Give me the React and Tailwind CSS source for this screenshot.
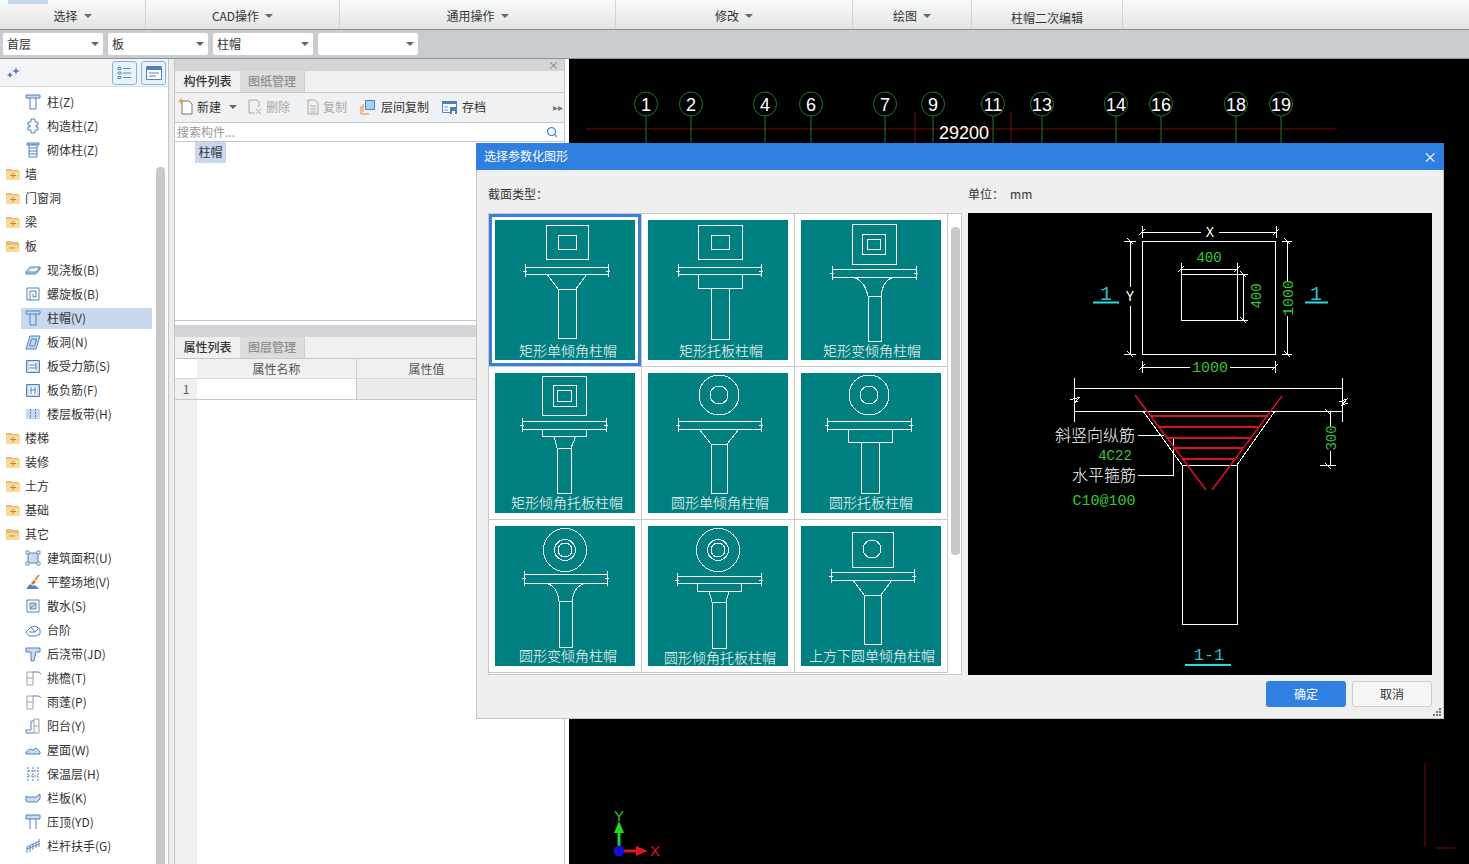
import { Search } from 'lucide-react'

const ribbon = [
  { label: '选择', w: 'w-[146px]' },
  { label: 'CAD操作', w: 'w-[194px]' },
  { label: '通用操作', w: 'w-[276px]' },
  { label: '修改', w: 'w-[237px]' },
  { label: '绘图', w: 'w-[119px]' },
  { label: '柱帽二次编辑', w: 'w-[151px]', plain: true },
]

const selects = ['首层', '板', '柱帽', '']

const B = '#4f81bd'
const L = '#c6dcf5'

// Small tree icons, 16x16
const icons = {
  column: <><path d="M1 1h14v3H1z" fill={L} stroke={B} /><path d="M5 4v11h6V4" fill="none" stroke={B} /></>,
  gz: <path d="M6 1h4v3h3v3h-2v2h2v3h-3v3H6v-3H3V9h2V7H3V4h3z" fill="#fff" stroke={B} />,
  brick: <><path d="M2 1h12v2H2z" fill={L} stroke={B} /><path d="M4 3h8v12H4z" fill="#fff" stroke={B} /><path d="M4 6h8M4 9h8M4 12h8" stroke={B} /></>,
  slab: <path d="M1 10l4-5h10v2l-4 5H1zM1 10h10l4-5" fill={L} stroke={B} />,
  spiral: <><path d="M2 2h12v12H2z" fill="#fff" stroke={B} /><path d="M5 14V5h6v6H8V8" fill="none" stroke={B} /></>,
  hole: <path d="M5 2h10l-4 13H1zM6.5 5h5l-2 7h-5z" fill={L} stroke={B} />,
  rebarH: <><path d="M1.500 2.500h13v12h-13z" fill={L} stroke={B} /><path d="M4 4.500h8v8H4z" fill="#fff" /><path d="M4 7h7M4 10h7M11 5v7" stroke={B} fill="none" /></>,
  rebarV: <><path d="M1.500 2.500h13v12h-13z" fill={L} stroke={B} /><path d="M4 4.500h8v8H4z" fill="#fff" /><path d="M6 5v7M10 5v7M5 8h6" stroke={B} fill="none" /></>,
  band: <><path d="M1 3h14v10H1z" fill={L} /><path d="M5.5 3v10M10.5 3v10" stroke={B} strokeDasharray="2 1" /></>,
  area: <><path d="M3 3h10v10H3z" fill={L} stroke={B} /><path d="M1 1h3v3H1zM12 1h3v3h-3zM1 12h3v3H1zM12 12h3v3h-3z" fill="#fff" stroke="#7a8ca5" /></>,
  site: <><path d="M1 15l4-5 3 2 2-1 4 4z" fill={B} /><path d="M6 9l3-3 2 2-3 3z" fill="#e0702a" /><path d="M10 6l4-5" stroke="#e0702a" strokeWidth="1.5" /></>,
  apron: <><path d="M2 2h12v12H2z" fill="#fff" stroke={B} /><path d="M5 5h6v6H5z" fill={L} stroke={B} /><path d="M6 10l4-4" stroke="#c06030" /></>,
  step: <path d="M1 10l5-5 4-1 5 3v5l-4 2H4zM4 10h6l3-3M6 5l4 5" fill="#fff" stroke={B} />,
  joint: <path d="M1 2h14v4h-4l-2 9H6V6H1z" fill={L} stroke={B} />,
  eave: <><path d="M2 2h6v13H2zM2 8h6" fill="#fff" stroke="#a0a0a0" /><path d="M8 2h6l2 2" fill="none" stroke={B} /></>,
  balcony: <><path d="M9 1h5v14H9zM9 8h5" fill="#fff" stroke="#a0a0a0" /><path d="M9 3H6v9H1v3h8" fill="none" stroke={B} /></>,
  roof: <path d="M1 10l4-3 3 1 3-2 4 4v2H1z" fill={L} stroke={B} />,
  insul: <path d="M3 1v14M8 1v14M13 1v14M3 5h10M3 10h10" fill="none" stroke={B} strokeDasharray="2 1" />,
  rail: <path d="M1 6l2 1h8l4-3v5l-3 3H3L1 11z" fill={L} stroke={B} />,
  coping: <><path d="M1 1h14v4H1z" fill={L} stroke={B} /><path d="M5 5v10M11 5v10" stroke={B} /></>,
  handrail: <path d="M2 15V9l12-6M5 8v6M8 6v6M11 5v5M14 1v8M2 11l12-5" fill="none" stroke={B} />,
}

const tree = [
  { label: '柱(Z)', icon: 'column' },
  { label: '构造柱(Z)', icon: 'gz' },
  { label: '砌体柱(Z)', icon: 'brick' },
  { label: '墙', group: true },
  { label: '门窗洞', group: true },
  { label: '梁', group: true },
  { label: '板', group: true, open: true },
  { label: '现浇板(B)', icon: 'slab' },
  { label: '螺旋板(B)', icon: 'spiral' },
  { label: '柱帽(V)', icon: 'column', selected: true },
  { label: '板洞(N)', icon: 'hole' },
  { label: '板受力筋(S)', icon: 'rebarH' },
  { label: '板负筋(F)', icon: 'rebarV' },
  { label: '楼层板带(H)', icon: 'band' },
  { label: '楼梯', group: true },
  { label: '装修', group: true },
  { label: '土方', group: true },
  { label: '基础', group: true },
  { label: '其它', group: true, open: true },
  { label: '建筑面积(U)', icon: 'area' },
  { label: '平整场地(V)', icon: 'site' },
  { label: '散水(S)', icon: 'apron' },
  { label: '台阶', icon: 'step' },
  { label: '后浇带(JD)', icon: 'joint' },
  { label: '挑檐(T)', icon: 'eave' },
  { label: '雨蓬(P)', icon: 'eave' },
  { label: '阳台(Y)', icon: 'balcony' },
  { label: '屋面(W)', icon: 'roof' },
  { label: '保温层(H)', icon: 'insul' },
  { label: '栏板(K)', icon: 'rail' },
  { label: '压顶(YD)', icon: 'coping' },
  { label: '栏杆扶手(G)', icon: 'handrail' },
]

function Caret() {
  return <span className="inline-block border-x-[4px] border-t-[4px] border-x-transparent border-t-[#666]" />
}

function Folder({ open }) {
  return (
    <svg width="16" height="14" viewBox="0 0 16 14" className="shrink-0">
      <path d="M1 2h5l1 1h7v10H1z" fill="#e8bc6c" />
      <path d={open ? 'M0 6h13l2 7H1z' : 'M1 4h14v9H1z'} fill="#f8d99a" />
      <path d={open ? 'M4 9h6' : 'M5 8.500h6M8 6v5'} stroke="#c08a30" />
    </svg>
  )
}

function TreeRow({ item }) {
  if (item.group) {
    return (
      <div className="h-[24px] flex items-center pl-[5px] gap-[4px]">
        <Folder open={item.open} />
        <span>{item.label}</span>
      </div>
    )
  }
  return (
    <div className="h-[24px] flex items-center">
      <div className={`ml-[21px] w-[131px] h-[21px] flex items-center pl-[4px] gap-[6px] ${item.selected ? 'bg-[#c9d8ee]' : ''}`}>
        <svg width="16" height="16" viewBox="0 0 16 16" className="shrink-0">{icons[item.icon]}</svg>
        <span>{item.label}</span>
      </div>
    </div>
  )
}

function LeftPanel() {
  return (
    <div className="w-[169px] shrink-0 flex flex-col bg-white border-r border-[#c4c4c4]">
      <div className="h-[28px] shrink-0 bg-[#f3f4f6] border-b border-[#dcdcdc] flex items-center pl-[6px]">
        <svg width="15" height="14" viewBox="0 0 15 14">
          <path d="M10 1l1 3 3 1-3 1-1 3-1-3-3-1 3-1zM4 6l1 2 2 1-2 1-1 2-1-2-2-1 2-1z" fill="#4f7fc0" />
        </svg>
        <button className="ml-[91px] w-[25px] h-[24px] rounded-[3px] border border-[#7db5ea] bg-[#e8f2fc] flex items-center justify-center">
          <svg width="15" height="14" viewBox="0 0 15 14" fill="none" stroke="#5b8cc8">
            <path d="M1 1.500h3v2H1zM1 6h3v2H1zM1 10.500h3v2H1zM6 2.500h8M6 7h8M6 11.500h8" />
          </svg>
        </button>
        <button className="ml-[4px] w-[25px] h-[24px] rounded-[3px] border border-[#7db5ea] bg-[#e8f2fc] flex items-center justify-center">
          <svg width="16" height="14" viewBox="0 0 16 14">
            <path d="M.5.500h15v13H.5z" fill="#fff" stroke="#4f81bd" />
            <path d="M1 1h14v3H1z" fill="#4f81bd" />
            <path d="M3 7h10M3 10h7" stroke="#4f81bd" />
          </svg>
        </button>
      </div>
      <div className="flex-1 flex min-h-0">
        <div className="w-[156px] pt-[3px] overflow-hidden">
          {tree.map((t) => (
            <TreeRow key={t.label + (t.icon || '')} item={t} />
          ))}
        </div>
        <div className="pt-[80px]">
          <div className="w-[9px] h-full bg-[#c8c8c8] rounded-t-[4px]" />
        </div>
      </div>
    </div>
  )
}

function Tabs({ a, b }) {
  return (
    <div className="h-[22px] shrink-0 bg-[#f0f0f0] border-b border-[#c8c8c8] flex font-medium">
      <div className="w-[65px] flex items-center justify-center pb-[2px] text-[#333]">{a}</div>
      <div className="w-[65px] flex items-center justify-center pb-[2px] bg-[#dcdcdc] text-[#8e8e8e] border-r border-[#cfcfcf]">{b}</div>
    </div>
  )
}

function MiddlePanel() {
  return (
    <div className="w-[391px] shrink-0 flex flex-col bg-white border-x border-[#c4c4c4]">
      <div className="h-[12px] shrink-0 bg-[#d3d5d9] flex items-center justify-end pr-[5px] text-[11px] leading-none text-[#777]">×</div>
      <Tabs a="构件列表" b="图纸管理" />
      <div className="h-[30px] shrink-0 bg-[#f0f1f3] border-b border-[#c8c8c8] flex items-center pl-[3px] pb-[2px]">
        <svg width="16" height="17" viewBox="0 0 16 17" className="shrink-0">
          <path d="M4 3h7l3 3v10H4z" fill="#fff" stroke="#777" />
          <path d="M3 0l1 2 2 1-2 1-1 2-1-2-2-1 2-1z" fill="#e8a030" />
        </svg>
        <span className="ml-[3px] text-[#333]">新建</span>
        <span className="ml-[8px] flex"><Caret /></span>
        <svg width="16" height="16" viewBox="0 0 16 16" className="ml-[10px] shrink-0" fill="none" stroke="#a8a8a8">
          <path d="M2 1h8l2 2v5M2 1v13h6M9 10l5 5M14 10l-5 5" />
        </svg>
        <span className="ml-[3px] text-[#a8a8a8]">删除</span>
        <svg width="16" height="16" viewBox="0 0 16 16" className="ml-[15px] shrink-0" fill="none" stroke="#a8a8a8">
          <path d="M3 1h7l3 3v11H3zM5 7h6M5 10h6M5 13h6" />
        </svg>
        <span className="ml-[2px] text-[#a8a8a8]">复制</span>
        <svg width="16" height="16" viewBox="0 0 16 16" className="ml-[13px] shrink-0">
          <path d="M1 15V7M1 15h8" stroke="#e08a40" fill="none" />
          <path d="M3 13V5" stroke="#e08a40" />
          <path d="M5.500 1.500h9v9h-9z" fill="#a9cdf5" stroke="#4f81bd" />
        </svg>
        <span className="ml-[5px] text-[#333]">层间复制</span>
        <svg width="16" height="16" viewBox="0 0 16 16" className="ml-[13px] shrink-0">
          <path d="M.5 2.500h14v11H.5z" fill="#fff" stroke="#4f81bd" />
          <path d="M0 2h15v3H0z" fill="#4f81bd" />
          <path d="M2 7h4v2H2zM2 10h4v2H2z" fill="#a9cdf5" />
          <path d="M8 8h7v7H8z" fill="#4f81bd" />
          <path d="M10 12h3v3h-3z" fill="#fff" />
        </svg>
        <span className="ml-[4px] text-[#333]">存档</span>
        <span className="ml-auto mr-[1px] text-[10px] leading-none text-[#777]">▸▸</span>
      </div>
      <div className="h-[19px] shrink-0 border-b border-[#c8c8c8] flex items-center pl-[2px] pr-[6px] text-[#999]">
        <span>搜索构件...</span>
        <Search size={12} strokeWidth={2.5} color="#3f86d8" className="ml-auto" />
      </div>
      <div className="h-[179px] shrink-0 border-b border-[#c8c8c8] pl-[20px]">
        <div className="w-[31px] h-[21px] pb-[2px] bg-[#c9d8ee] flex items-center justify-center text-[#333]">柱帽</div>
      </div>
      <div className="h-[4px] shrink-0" />
      <div className="h-[12px] shrink-0 bg-[#d3d5d9]" />
      <Tabs a="属性列表" b="图层管理" />
      <div className="h-[20px] shrink-0 flex text-[#555] bg-[#f0f0f0] border-b border-[#d8d8d8]">
        <div className="w-[22px] bg-white" />
        <div className="w-[160px] flex items-center justify-center border-r border-[#d0d0d0]">属性名称</div>
        <div className="w-[139px] flex items-center justify-center">属性值</div>
      </div>
      <div className="h-[21px] shrink-0 flex border-b border-[#c8c8c8]">
        <div className="w-[22px] bg-[#f0f0f0] flex items-center justify-center text-[#555]">1</div>
        <div className="w-[160px] bg-white border-r border-[#c8c8c8]" />
        <div className="flex-1 bg-[#ebebeb]" />
      </div>
      <div className="flex-1 flex">
        <div className="w-[22px] bg-[#f0f0f0]" />
      </div>
    </div>
  )
}

const gridX = [646, 691, 765, 811, 885, 933, 993, 1042, 1116, 1161, 1236, 1281]
const gridLabels = [1, 2, 4, 6, 7, 9, 11, 13, 14, 16, 18, 19]

function CadCanvas() {
  return (
    <div className="flex-1 relative bg-black overflow-hidden">
      <svg width="900" height="805" viewBox="569 59 900 805" className="absolute inset-0" fill="none" fontFamily="'Liberation Sans', sans-serif">
        <path d="M586 129H1336" stroke="#7a0a0a" />
        <path d="M915 112V143M1011 112V143" stroke="#7a0a0a" />
        {gridX.map((x, i) => (
          <g key={x}>
            <path d={`M${x} 116V143`} stroke="#1a7a2a" />
            <ellipse cx={x} cy="104" rx="11.500" ry="12" stroke="#1a7a2a" />
            <text x={x} y="110.500" fontSize="18" fill="#fff" textAnchor="middle">{gridLabels[i]}</text>
          </g>
        ))}
        <text x="964" y="139" fontSize="18" fill="#fff" textAnchor="middle">29200</text>
        <path d="M1425 763V847M1436 848H1455" stroke="#7a0a0a" />
        <path d="M619 851V831" stroke="#22d822" strokeWidth="3" />
        <path d="M619 821l-5 12h10z" fill="#22d822" />
        <path d="M619 851H638" stroke="#e01818" strokeWidth="3" />
        <path d="M648 851l-12-5v10z" fill="#e01818" />
        <circle cx="619" cy="851" r="5.500" fill="#1010d0" />
        <text x="619" y="821" fontSize="15" fill="#22c822" textAnchor="middle">Y</text>
        <text x="655" y="856" fontSize="15" fill="#d01818" textAnchor="middle">X</text>
      </svg>
    </div>
  )
}

// Slab with break ticks at both ends, shared by the thumbnails
function Slab({ x1, x2, y1, y2 }) {
  return (
    <path d={`M${x1} ${y1}H${x2}V${y2}H${x1}ZM${x1} ${y1 - 3}V${y2 + 3}M${x2} ${y1 - 3}V${y2 + 3}M${x1 - 2} ${y1 + 4}H${x1 + 2}M${x2 - 2} ${y1 + 4}H${x2 + 2}`} />
  )
}

const tiles = [
  {
    label: '矩形单倾角柱帽', lx: 73, ly: 136,
    draw: <>
      <path d="M51 5H93V39H51ZM63 15H81V29H63Z" />
      <Slab x1={30} x2={113} y1={47} y2={54} />
      <path d="M52 54L63 69M92 54L81 69M63 69H81V118H63Z" />
    </>,
  },
  {
    label: '矩形托板柱帽', lx: 73, ly: 136,
    draw: <>
      <path d="M50 5H94V39H50ZM63 15H81V29H63Z" />
      <Slab x1={30} x2={113} y1={47} y2={54} />
      <path d="M50 54H94V68H50ZM63 68H81V119H63Z" />
    </>,
  },
  {
    label: '矩形变倾角柱帽', lx: 71, ly: 136,
    draw: <>
      <path d="M51 4H95V44H51ZM61 14H84V34H61ZM66 19H79V29H66Z" />
      <Slab x1={31} x2={115} y1={49} y2={57} />
      <path d="M51 57Q63 59 67 76M94 57Q82 59 80 76M67 76H80V121H67Z" />
    </>,
  },
  {
    label: '矩形倾角托板柱帽', lx: 72, ly: 135,
    draw: <>
      <path d="M47 3H91V42H47ZM58 12H81V33H58ZM62 17H76V28H62Z" />
      <Slab x1={27} x2={111} y1={48} y2={56} />
      <path d="M47 56H91V63H47ZM59 63L62 75M81 63L76 75M62 75H76V120H62Z" />
    </>,
  },
  {
    label: '圆形单倾角柱帽', lx: 72, ly: 135,
    draw: <>
      <circle cx="71" cy="22" r="20" />
      <circle cx="71" cy="22" r="9" />
      <Slab x1={30} x2={113} y1={48} y2={56} />
      <path d="M51 56L63 71M91 56L79 71M63 71H79V120H63Z" />
    </>,
  },
  {
    label: '圆形托板柱帽', lx: 70, ly: 135,
    draw: <>
      <circle cx="68" cy="22" r="20" />
      <circle cx="68" cy="22" r="9" />
      <Slab x1={26} x2={110} y1={48} y2={56} />
      <path d="M47 56H91V69H47ZM60 69H78V120H60Z" />
    </>,
  },
  {
    label: '圆形变倾角柱帽', lx: 73, ly: 135,
    draw: <>
      <circle cx="70" cy="24" r="21.500" />
      <circle cx="70" cy="24" r="10.500" />
      <circle cx="70" cy="24" r="7" />
      <Slab x1={29} x2={112} y1={48} y2={57} />
      <path d="M50 57Q62 59 64 75M92 57Q79 59 77 75M64 75H77V121H64Z" />
    </>,
  },
  {
    label: '圆形倾角托板柱帽', lx: 72, ly: 137,
    draw: <>
      <circle cx="70" cy="24" r="21.500" />
      <circle cx="70" cy="24" r="10.500" />
      <circle cx="70" cy="24" r="7" />
      <Slab x1={29} x2={113} y1={50} y2={57} />
      <path d="M49 57H93V65H49ZM61 65L64 76M81 65L78 76M64 76H78V122H64Z" />
    </>,
  },
  {
    label: '上方下圆单倾角柱帽', lx: 71, ly: 135,
    draw: <>
      <path d="M51 6H92V41H51Z" />
      <circle cx="71" cy="23" r="9" />
      <Slab x1={30} x2={113} y1={46} y2={54} />
      <path d="M52 54L63 69M91 54L80 69M63 69H80V118H63Z" />
    </>,
  },
]

function Tile({ tile, selected }) {
  return (
    <div className={`w-[153px] h-[153px] p-[6px] border-r border-b border-[#c8c8c8] bg-white ${selected ? 'shadow-[inset_0_0_0_3px_#3c7fd9]' : ''}`}>
      <svg width="140" height="140" viewBox="0 0 140 140" className="block bg-[#008080]">
        <g fill="none" stroke="#fff" shapeRendering="crispEdges">{tile.draw}</g>
        <text x={tile.lx} y={tile.ly} fontSize="14" fill="#fff" textAnchor="middle" fontWeight="300">{tile.label}</text>
      </svg>
    </div>
  )
}

function Preview() {
  const g = '#32c832'
  const c = '#2fc0c8'
  const mono = "'Liberation Mono', monospace"
  return (
    <svg width="464" height="462" viewBox="968 213 464 462" className="block bg-black" fill="none">
      <g stroke="#fff" shapeRendering="crispEdges">
        <path d="M1142 241H1275V354H1142ZM1181 274H1237V320H1181Z" />
        <path d="M1142 232H1201M1219 232H1276M1139 235L1145 229M1273 235L1279 229M1142 226V238M1276 226V238" />
        <path d="M1130 241V287M1130 306V354M1124 241H1136M1124 354H1136M1127 238L1133 244M1127 351L1133 357" />
        <path d="M1287 241V282M1287 316V354M1282 241H1292M1282 354H1292M1284 238L1290 244M1284 351L1290 357" />
        <path d="M1142 367H1190M1230 367H1275M1139 370L1145 364M1272 370L1278 364M1142 361V373M1275 361V373" />
        <path d="M1181 269H1237M1181 263V275M1237 263V275M1178 272L1184 266M1234 272L1240 266" />
        <path d="M1243 274V320M1238 274H1248M1238 320H1248M1240 271L1246 277M1240 317L1246 323" />
        <path d="M1074 388H1342M1074 411H1342M1074 378V422M1342 378V422" />
        <path d="M1070 400L1080 397L1074 403L1078 401M1339 402L1347 399L1342 405L1348 403" />
        <path d="M1143 411L1182 465M1275 411L1237 465M1182 465H1237V624H1182Z" />
        <path d="M1330 411V426M1330 451V465M1320 465H1336M1325 409L1331 415M1325 463L1331 469" />
        <path d="M1138 435H1164M1138 475H1173V438" />
      </g>
      <g stroke="#e01020" strokeWidth="1.500">
        <path d="M1135 395L1206 490M1282 396L1212 490" />
      </g>
      <g stroke="#e01020" strokeWidth="2" shapeRendering="crispEdges">
        <path d="M1150 416H1268M1159 427H1258M1166 438H1250M1173 448H1243M1182 459H1235" />
      </g>
      <path d="M1093 302.500H1119M1305 302.500H1328M1185 665H1231" stroke="#22e0e8" strokeWidth="2" />
      <g fontFamily={mono} fontSize="14" fill={g} textAnchor="middle">
        <text x="1209" y="262">400</text>
        <text x="1210" y="372" fontSize="15">1000</text>
        <text x="1115" y="460" fontSize="14">4C22</text>
        <text x="1104" y="505" fontSize="15">C10@100</text>
        <text transform="translate(1261 296) rotate(-90)">400</text>
        <text transform="translate(1293 298) rotate(-90)" fontSize="15">1000</text>
        <text transform="translate(1336 438) rotate(-90)">300</text>
      </g>
      <g fontFamily={mono} fontSize="14" fill="#fff" textAnchor="middle">
        <text x="1210" y="237">X</text>
        <text x="1130" y="301">Y</text>
      </g>
      <g fontFamily={mono} fontSize="20" fill={c} textAnchor="middle">
        <text x="1106" y="300">1</text>
        <text x="1316" y="300">1</text>
        <text x="1209" y="660" fontSize="17">1-1</text>
      </g>
      <g fontSize="16" fill="#fff" fontWeight="300">
        <text x="1055" y="441">斜竖向纵筋</text>
        <text x="1072" y="481">水平箍筋</text>
      </g>
    </svg>
  )
}

function Dialog() {
  return (
    <div className="absolute left-[476px] top-[143px] w-[968px] h-[576px] bg-[#efefef] border border-[#c4c4c4] flex flex-col">
      <div className="h-[27px] shrink-0 -mx-px -mt-px bg-[#2f7fdf] text-white flex items-center pl-[8px] pr-[7px] pb-[1px]">
        <span>选择参数化图形</span>
        <span className="ml-auto text-[14px] leading-none">×</span>
      </div>
      <div className="flex px-[11px]">
        <div className="w-[480px] shrink-0">
          <div className="h-[43px] flex items-center pt-[4px] text-[#333]">截面类型：</div>
          <div className="w-[474px] h-[462px] bg-white border border-[#c8c8c8] flex overflow-hidden">
            <div className="grid grid-cols-[repeat(3,153px)] auto-rows-[153px]">
              {tiles.map((t, i) => (
                <Tile key={t.label} tile={t} selected={i === 0} />
              ))}
            </div>
            <div className="pl-[3px] pt-[13px]">
              <div className="w-[9px] h-[328px] rounded-[4px] bg-[#c8c8c8]" />
            </div>
          </div>
        </div>
        <div className="w-[464px] shrink-0">
          <div className="h-[43px] flex items-center pt-[5px] text-[#333]">
            <span>单位：</span>
            <span className="ml-[6px]">mm</span>
          </div>
          <Preview />
        </div>
      </div>
      <div className="flex justify-end gap-[6px] px-[11px] pt-[6px]">
        <button className="w-[80px] h-[26px] rounded-[3px] bg-[#2f80e0] text-white">确定</button>
        <button className="w-[80px] h-[26px] rounded-[3px] bg-[#f6f6f6] border border-[#cdcdcd] text-[#333]">取消</button>
      </div>
      <svg width="9" height="9" viewBox="0 0 9 9" className="absolute right-[1px] bottom-[1px]">
        <path d="M6 0h2v2H6zM3 3h2v2H3zM6 3h2v2H6zM0 6h2v2H0zM3 6h2v2H3zM6 6h2v2H6z" fill="#777" />
      </svg>
    </div>
  )
}

export default function App() {
  return (
    <div className="relative w-[1469px] h-[864px] overflow-hidden flex flex-col bg-white text-[12px] leading-none text-[#333] font-['Noto_Sans_CJK_SC','Noto_Sans',sans-serif]">
      {/* Ribbon */}
      <div className="relative h-[30px] shrink-0 flex bg-gradient-to-b from-[#f9fafa] to-[#e3e5e5] border-b border-[#8c8c8c]">
        <div className="absolute left-[8px] top-0 w-[40px] h-[4px] bg-[#c9d8ee]" />
        {ribbon.map((r) => (
          <div key={r.label} className={`${r.w} h-full border-r border-[#d2d4d4] flex items-center justify-center gap-[6px] ${r.plain ? 'pt-[7px]' : 'pt-[3px]'}`}>
            <span>{r.label}</span>
            {!r.plain && <Caret />}
          </div>
        ))}
      </div>

      {/* Combo row */}
      <div className="h-[29px] shrink-0 bg-[#c9ccd1] border-b border-[#8f9296] flex items-center pl-[3px] gap-[5px]">
        {selects.map((s, i) => (
          <div key={i} className="w-[100px] h-[22px] bg-white rounded-[2px] flex items-center justify-between pl-[4px] pr-[4px]">
            <span>{s}</span>
            <Caret />
          </div>
        ))}
      </div>

      <div className="flex-1 flex min-h-0">
        <LeftPanel />
        <div className="w-[5px] shrink-0 bg-[#ececec]" />
        <MiddlePanel />
        <div className="w-[4px] shrink-0 bg-white" />
        <CadCanvas />
      </div>

      <Dialog />
    </div>
  )
}
